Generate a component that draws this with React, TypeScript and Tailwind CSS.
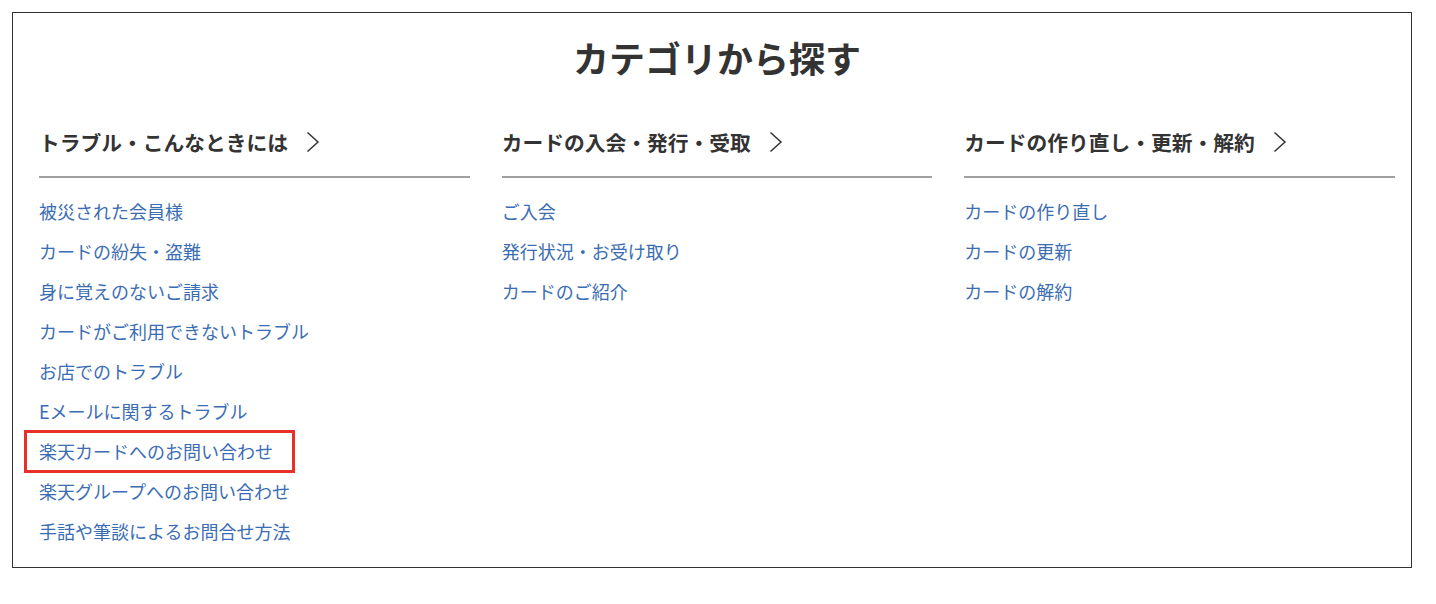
const columns = [
  {
    title: "トラブル・こんなときには",
    links: [
      "被災された会員様",
      "カードの紛失・盗難",
      "身に覚えのないご請求",
      "カードがご利用できないトラブル",
      "お店でのトラブル",
      "Eメールに関するトラブル",
      "楽天カードへのお問い合わせ",
      "楽天グループへのお問い合わせ",
      "手話や筆談によるお問合せ方法",
    ],
  },
  {
    title: "カードの入会・発行・受取",
    links: ["ご入会", "発行状況・お受け取り", "カードのご紹介"],
  },
  {
    title: "カードの作り直し・更新・解約",
    links: ["カードの作り直し", "カードの更新", "カードの解約"],
  },
];

const Chevron = () => (
  <svg width="14" height="22" viewBox="0 0 14 22" fill="none" className="shrink-0">
    <polyline points="1.5,1.5 12,11 1.5,20.5" stroke="#333" strokeWidth="1.5" />
  </svg>
);

export default function App() {
  return (
    <div
      className="w-[1436px] h-[604px] bg-white p-3"
      style={{ fontFamily: '"Noto Sans CJK JP", "Noto Sans", sans-serif' }}
    >
      <div className="w-[1400px] h-[556px] border border-[#333] pl-[26px] pr-[16px] pt-[20px]">
        <h1 className="text-center text-[36px] leading-[48px] font-bold text-[#333]">
          カテゴリから探す
        </h1>
        <div className="grid grid-cols-3 gap-8 mt-[47px]">
          {columns.map((col, i) => (
            <div key={i}>
              <div className="flex items-center gap-[18px] pb-[20px] border-b-2 border-[#a0a0a0]">
                <span className="text-[20.75px] leading-[28px] font-bold text-[#333]">{col.title}</span>
                <Chevron />
              </div>
              <ul className="mt-[13px]">
                {col.links.map((link, j) => (
                  <li key={j} className="text-[18px] leading-[40px] text-[#3b6db3]">
                    {link === "楽天カードへのお問い合わせ" ? (
                      <span className="relative">
                        {link}
                        <span className="absolute left-[-15px] right-[-22px] top-[-8px] bottom-[-9px] border-[3px] border-[#e8302a]" />
                      </span>
                    ) : (
                      link
                    )}
                  </li>
                ))}
              </ul>
            </div>
          ))}
        </div>
      </div>
    </div>
  );
}
